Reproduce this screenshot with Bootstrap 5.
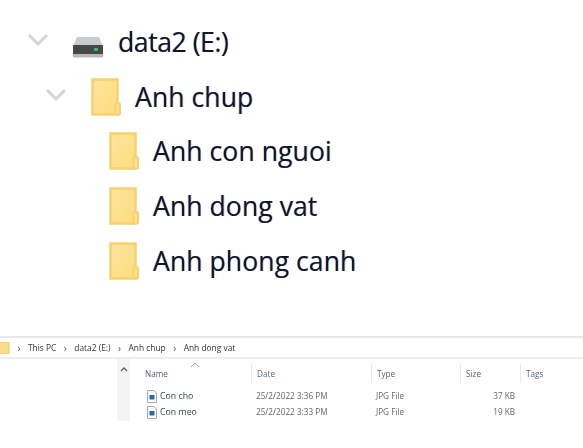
<!DOCTYPE html>
<html lang="en">
<head>
<meta charset="utf-8">
<title>Anh dong vat</title>
<link href="https://cdn.jsdelivr.net/npm/bootstrap@5.3.0/dist/css/bootstrap.min.css" rel="stylesheet">
<style>
html,body{margin:0;height:448px;overflow:hidden;background:#fff}
.pageroot{width:583px;height:448px;overflow:hidden;font-family:"Open Sans","Noto Sans",sans-serif}
.tree{padding-top:15px;height:336px;color:#14142a;font-size:26.7px;filter:blur(.55px);text-shadow:.7px 0 rgba(0,130,255,.4),-.7px 0 rgba(210,100,0,.4)}
.trow{height:54.6px}
.lv0{padding-left:27px}
.lv1{padding-left:45px}
.lv2{padding-left:109px}
.chev{width:22px;height:14px;flex:none;margin-bottom:6px}
.drive{width:32px;height:22px;margin-left:23px;margin-right:14px;margin-top:10px;flex:none}
.drivelabel{letter-spacing:-.5px}
.fold{width:31px;height:38px;flex:none}
.lv1 .fold{margin-left:24px;margin-right:13px}
.lv2 .fold{margin-right:13px}
.lowerpane{filter:blur(.6px)}
.crumbs{height:23px;padding-top:1px;border-top:2px solid #e8e8e8;border-bottom:2px solid #eeeeee;font-size:8.4px;color:#333;white-space:nowrap;overflow:hidden}
.crumbfold{width:10px;height:12px;flex:none}
.sep{width:18px;text-align:center;color:#555;font-size:10px}
.files{height:62px;padding-left:117px}
.scrolltrack{width:13px;background:#f4f4f4;flex:none;text-align:center;padding-top:8px;line-height:0}
.listing{flex:1;font-size:8.2px;color:#666;white-space:nowrap}
.cols{display:grid;grid-template-columns:121px 120px 89px 60px 63px}
.headrow{height:29px;color:#55657c;align-items:center}
.headcell{height:19px;padding-left:5px;border-left:1px solid #e9e9e9;line-height:19px;position:relative}
.headcell:first-child{border-left:0;padding-left:15px}
.sortup{position:absolute;left:60px;top:-2px;width:10px;height:6px}
.frow{height:16px;align-items:center;line-height:16px}
.fname{display:flex;align-items:center;padding-left:17px;color:#3a4658;gap:3px;font-size:8.8px}
.fdate,.ftype{padding-left:5px}
.fsize{text-align:right;padding-right:5px}
.ficon{width:10px;height:13px;flex:none}
</style>
</head>
<body>
<div class="pageroot">
  <div class="tree">
    <div class="trow lv0 d-flex align-items-center">
      <svg class="chev" viewBox="0 0 22 14"><path d="M2 3l9 9 9-9" fill="none" stroke="#d6d6d6" stroke-width="3"/></svg>
      <svg class="drive" viewBox="0 0 32 22"><path d="M5 1h22l4 9H1z" fill="#c9cbcc"/><rect x="1" y="9" width="30" height="9" fill="#45474a"/><rect x="1" y="18" width="30" height="3.500" fill="#b4b8ba"/><rect x="22" y="12" width="4" height="3" fill="#2fc24a"/></svg>
      <span class="drivelabel">data2 (E:)</span>
    </div>
    <div class="trow lv1 d-flex align-items-center">
      <svg class="chev" viewBox="0 0 22 14"><path d="M2 3l9 9 9-9" fill="none" stroke="#d6d6d6" stroke-width="3"/></svg>
      <svg class="fold" viewBox="0 0 31 38"><use href="#folderglyph"/></svg>
      <span>Anh chup</span>
    </div>
    <div class="trow lv2 d-flex align-items-center">
      <svg class="fold" viewBox="0 0 31 38"><use href="#folderglyph"/></svg>
      <span>Anh con nguoi</span>
    </div>
    <div class="trow lv2 d-flex align-items-center">
      <svg class="fold" viewBox="0 0 31 38"><use href="#folderglyph"/></svg>
      <span>Anh dong vat</span>
    </div>
    <div class="trow lv2 d-flex align-items-center">
      <svg class="fold" viewBox="0 0 31 38"><use href="#folderglyph"/></svg>
      <span>Anh phong canh</span>
    </div>
  </div>

  <div class="lowerpane">
    <div class="crumbs d-flex align-items-center">
      <svg class="crumbfold" viewBox="0 0 10 12"><rect x="-4" y="0" width="13" height="12" fill="#fbdd84" stroke="#eccb67"/></svg>
      <span class="sep">›</span><span>This PC</span>
      <span class="sep">›</span><span>data2 (E:)</span>
      <span class="sep">›</span><span>Anh chup</span>
      <span class="sep">›</span><span>Anh dong vat</span>
    </div>

    <div class="files d-flex">
      <div class="scrolltrack"><svg width="8" height="5" viewBox="0 0 8 5"><path d="M1 4l3-3 3 3" fill="none" stroke="#606060" stroke-width="1.4"/></svg></div>
      <div class="listing">
        <div class="cols headrow">
          <div class="headcell">Name<svg class="sortup" viewBox="0 0 10 6"><path d="M1 5l4-4 4 4" fill="none" stroke="#a8a8a8"/></svg></div>
          <div class="headcell">Date</div>
          <div class="headcell">Type</div>
          <div class="headcell">Size</div>
          <div class="headcell">Tags</div>
        </div>
        <div class="cols frow">
          <div class="fname"><svg class="ficon" viewBox="0 0 10 13"><use href="#fileglyph"/></svg>Con cho</div>
          <div class="fdate">25/2/2022 3:36 PM</div>
          <div class="ftype">JPG File</div>
          <div class="fsize">37 KB</div>
          <div></div>
        </div>
        <div class="cols frow">
          <div class="fname"><svg class="ficon" viewBox="0 0 10 13"><use href="#fileglyph"/></svg>Con meo</div>
          <div class="fdate">25/2/2022 3:33 PM</div>
          <div class="ftype">JPG File</div>
          <div class="fsize">19 KB</div>
          <div></div>
        </div>
      </div>
    </div>
  </div>
</div>

<svg width="0" height="0" class="d-block">
  <defs>
    <linearGradient id="foldfill" x1="0" y1="0" x2="1" y2="1"><stop offset="0" stop-color="#fee59c"/><stop offset="1" stop-color="#fddc80"/></linearGradient>
    <g id="folderglyph">
      <rect x="1.500" y="1.500" width="25" height="35" fill="url(#foldfill)" stroke="#f3d26f" stroke-width="2.500"/>
      <rect x="24.500" y="25" width="4.500" height="11.500" rx="1.500" fill="#fde08e" stroke="#f3d26f" stroke-width="2"/>
    </g>
    <g id="fileglyph">
      <path d="M.5.5h6.500l2.500 2.500v9.500h-9z" fill="#fff" stroke="#a4a9b0"/>
      <rect x="2.500" y="5" width="5" height="4.500" fill="#2467b8"/>
    </g>
  </defs>
</svg>
<script src="https://cdn.jsdelivr.net/npm/bootstrap@5.3.0/dist/js/bootstrap.bundle.min.js"></script>
</body>
</html>
